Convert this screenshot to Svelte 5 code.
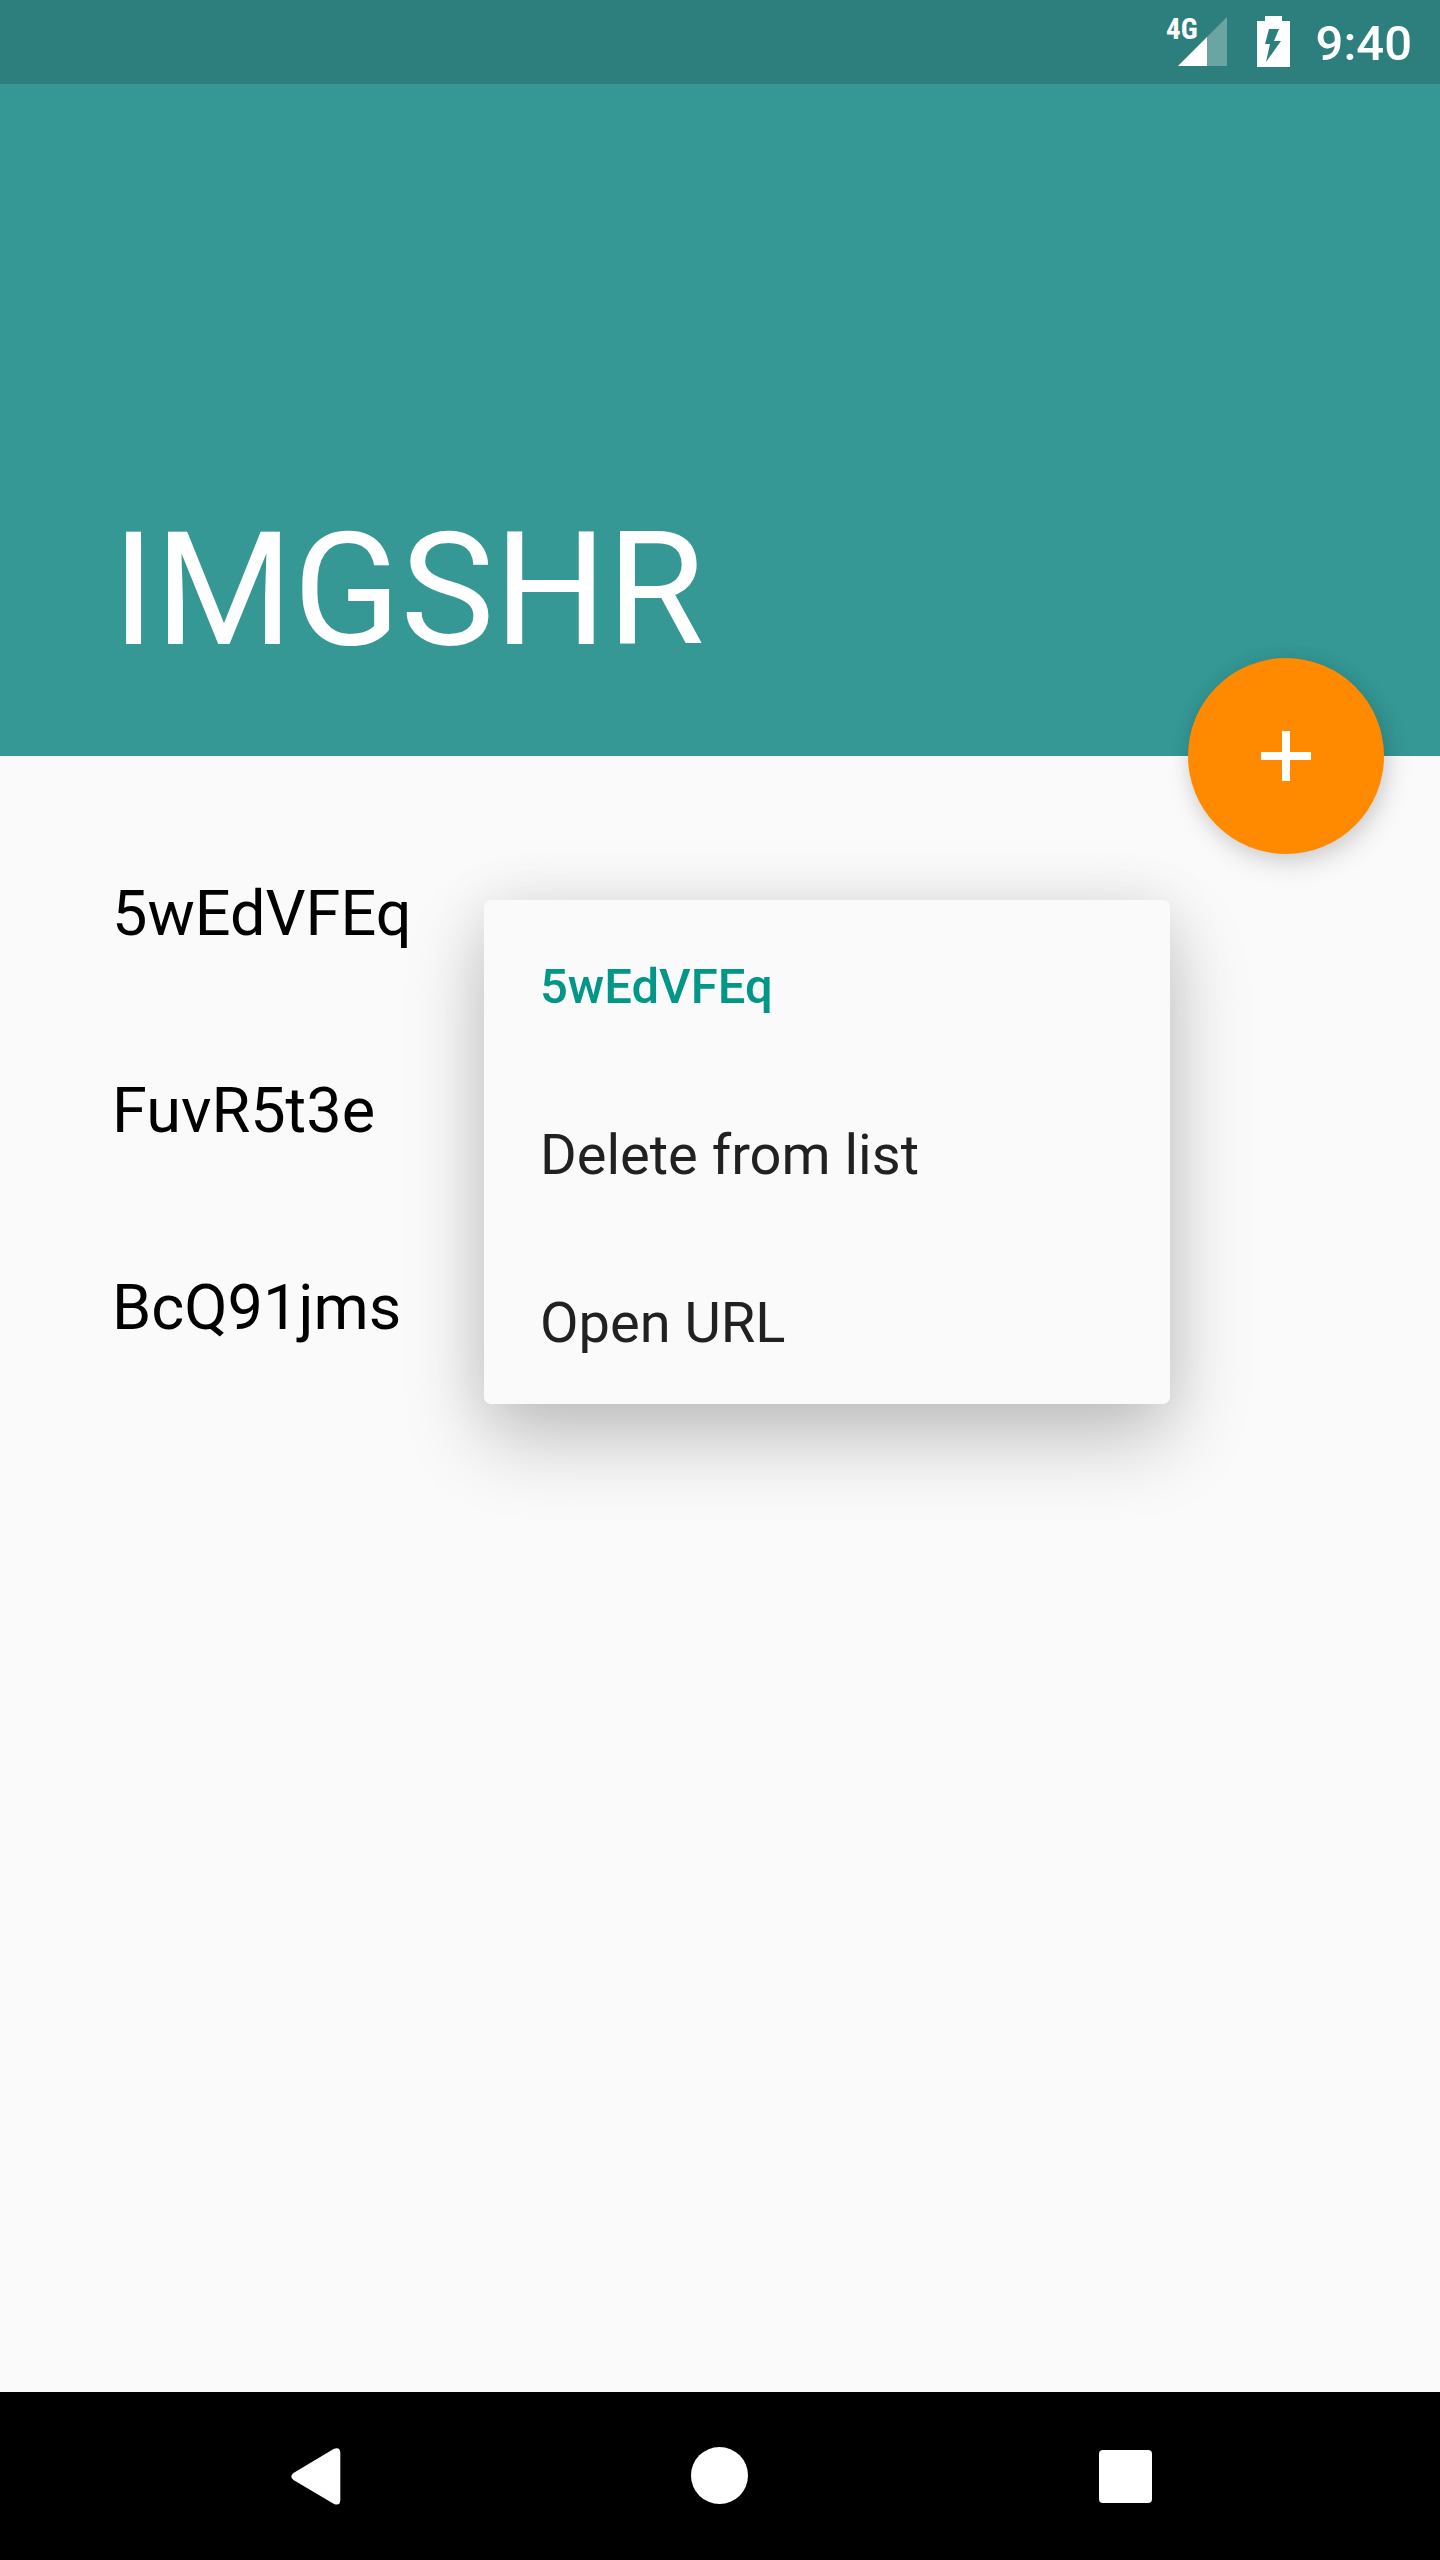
<script>
  const galleries = ['5wEdVFEq', 'FuvR5t3e', 'BcQ91jms'];
  const actions = ['Delete from list', 'Open URL'];
  let selected = $state(galleries[0]);
</script>

<div class="screen">
  <div class="status">
    <svg class="signal" viewBox="0 0 64 84" role="img" aria-label="4G signal">
      <text x="2" y="39">4G</text>
      <path class="dim" d="M43 37L63 17V66H43Z" />
      <path d="M14 66L43 37V66Z" />
    </svg>
    <svg class="battery" viewBox="0 0 33 84" role="img" aria-label="Battery charging">
      <path fill-rule="evenodd" d="M8 16H25V21H33V67H0V21H8ZM12 29H22L17 41H24L9 62L13 44H8Z" />
    </svg>
    <time>9:40</time>
  </div>

  <header>
    <h1>IMGSHR</h1>
    <button class="fab" type="button" aria-label="Add gallery">
      <svg viewBox="0 0 50 50"><path d="M21 0H29V21H50V29H29V50H21V29H0V21H21Z" /></svg>
    </button>
  </header>

  <main>
    <ul>
      {#each galleries as name}
        <li><button type="button" onclick={() => (selected = name)}>{name}</button></li>
      {/each}
    </ul>
    <div class="menu" role="menu" aria-label={selected}>
      <h2>{selected}</h2>
      {#each actions as action}
        <button type="button" role="menuitem">{action}</button>
      {/each}
    </div>
  </main>

  <nav>
    <button type="button" aria-label="Back">
      <svg viewBox="0 0 64 64"><path d="M10.500 29L51 4.700Q57.300 2.500 57.300 9V56Q57.300 62 51 60L10.500 36Q6 32.500 10.500 29Z" /></svg>
    </button>
    <button type="button" aria-label="Home">
      <svg viewBox="0 0 64 64"><circle cx="31.500" cy="31.500" r="28.500" /></svg>
    </button>
    <button type="button" aria-label="Recent apps">
      <svg viewBox="0 0 64 64"><rect x="6" y="6" width="53" height="53" rx="4" /></svg>
    </button>
  </nav>
</div>

<style>
  :global(body) {
    margin: 0;
  }
  .screen {
    min-height: 100vh;
    display: flex;
    flex-direction: column;
    background: #fafafa;
    color: #000;
    font-family: Roboto, sans-serif;
  }
  button {
    border: 0;
    margin: 0;
    padding: 0;
    background: none;
    color: inherit;
    font: inherit;
    cursor: pointer;
  }
  svg {
    display: block;
    fill: #fff;
  }
  .status {
    height: 84px;
    display: flex;
    justify-content: flex-end;
    align-items: center;
    padding-right: 28px;
    background: #2c7f7c;
    color: #fff;
  }
  .signal {
    width: 64px;
    height: 84px;
    margin-right: 29px;
  }
  .signal text {
    font: 700 29px 'Roboto Condensed', 'Liberation Sans Narrow', Roboto, sans-serif;
  }
  .dim {
    opacity: 0.3;
  }
  .battery {
    width: 33px;
    height: 84px;
    margin-right: 26px;
  }
  time {
    padding-top: 4px;
    font-size: 49px;
    font-weight: 500;
    line-height: 58px;
  }
  header {
    position: relative;
    height: 672px;
    box-sizing: border-box;
    display: flex;
    align-items: flex-end;
    padding: 0 112px 73px;
    background: #359895;
    color: #fff;
  }
  h1 {
    margin: 0;
    font-size: 158px;
    font-weight: 400;
    line-height: 186px;
  }
  .fab {
    position: absolute;
    z-index: 1;
    right: 56px;
    bottom: -98px;
    width: 196px;
    height: 196px;
    display: grid;
    place-items: center;
    border-radius: 50%;
    background: #ff8a00;
    box-shadow: 4px 10px 26px rgba(0, 0, 0, 0.14), 0 0 18px rgba(0, 0, 0, 0.08);
  }
  .fab svg {
    width: 50px;
    height: 50px;
  }
  main {
    position: relative;
    flex: 1;
    padding-top: 59px;
  }
  ul {
    list-style: none;
    margin: 0;
    padding: 0;
  }
  li button {
    width: 100%;
    height: 197px;
    padding: 0 112px;
    text-align: left;
    font-size: 63px;
  }
  .menu {
    position: absolute;
    top: 144px;
    left: 484px;
    width: 686px;
    display: flex;
    flex-direction: column;
    border-radius: 7px;
    background: #fafafa;
    color: #212121;
    box-shadow: 0 36px 80px rgba(0, 0, 0, 0.22), 0 0 60px rgba(0, 0, 0, 0.08);
  }
  h2,
  .menu button {
    height: 168px;
    box-sizing: border-box;
    margin: 0;
    padding: 6px 56px 0;
    text-align: left;
    font-size: 56px;
    line-height: 162px;
  }
  h2 {
    color: #009688;
    font-size: 49px;
    font-weight: 500;
  }
  nav {
    height: 168px;
    box-sizing: border-box;
    display: grid;
    grid-template-columns: repeat(3, 1fr);
    padding: 0 112px;
    background: #000;
  }
  nav button {
    display: grid;
    place-items: center;
  }
  nav svg {
    width: 64px;
    height: 64px;
  }
</style>
